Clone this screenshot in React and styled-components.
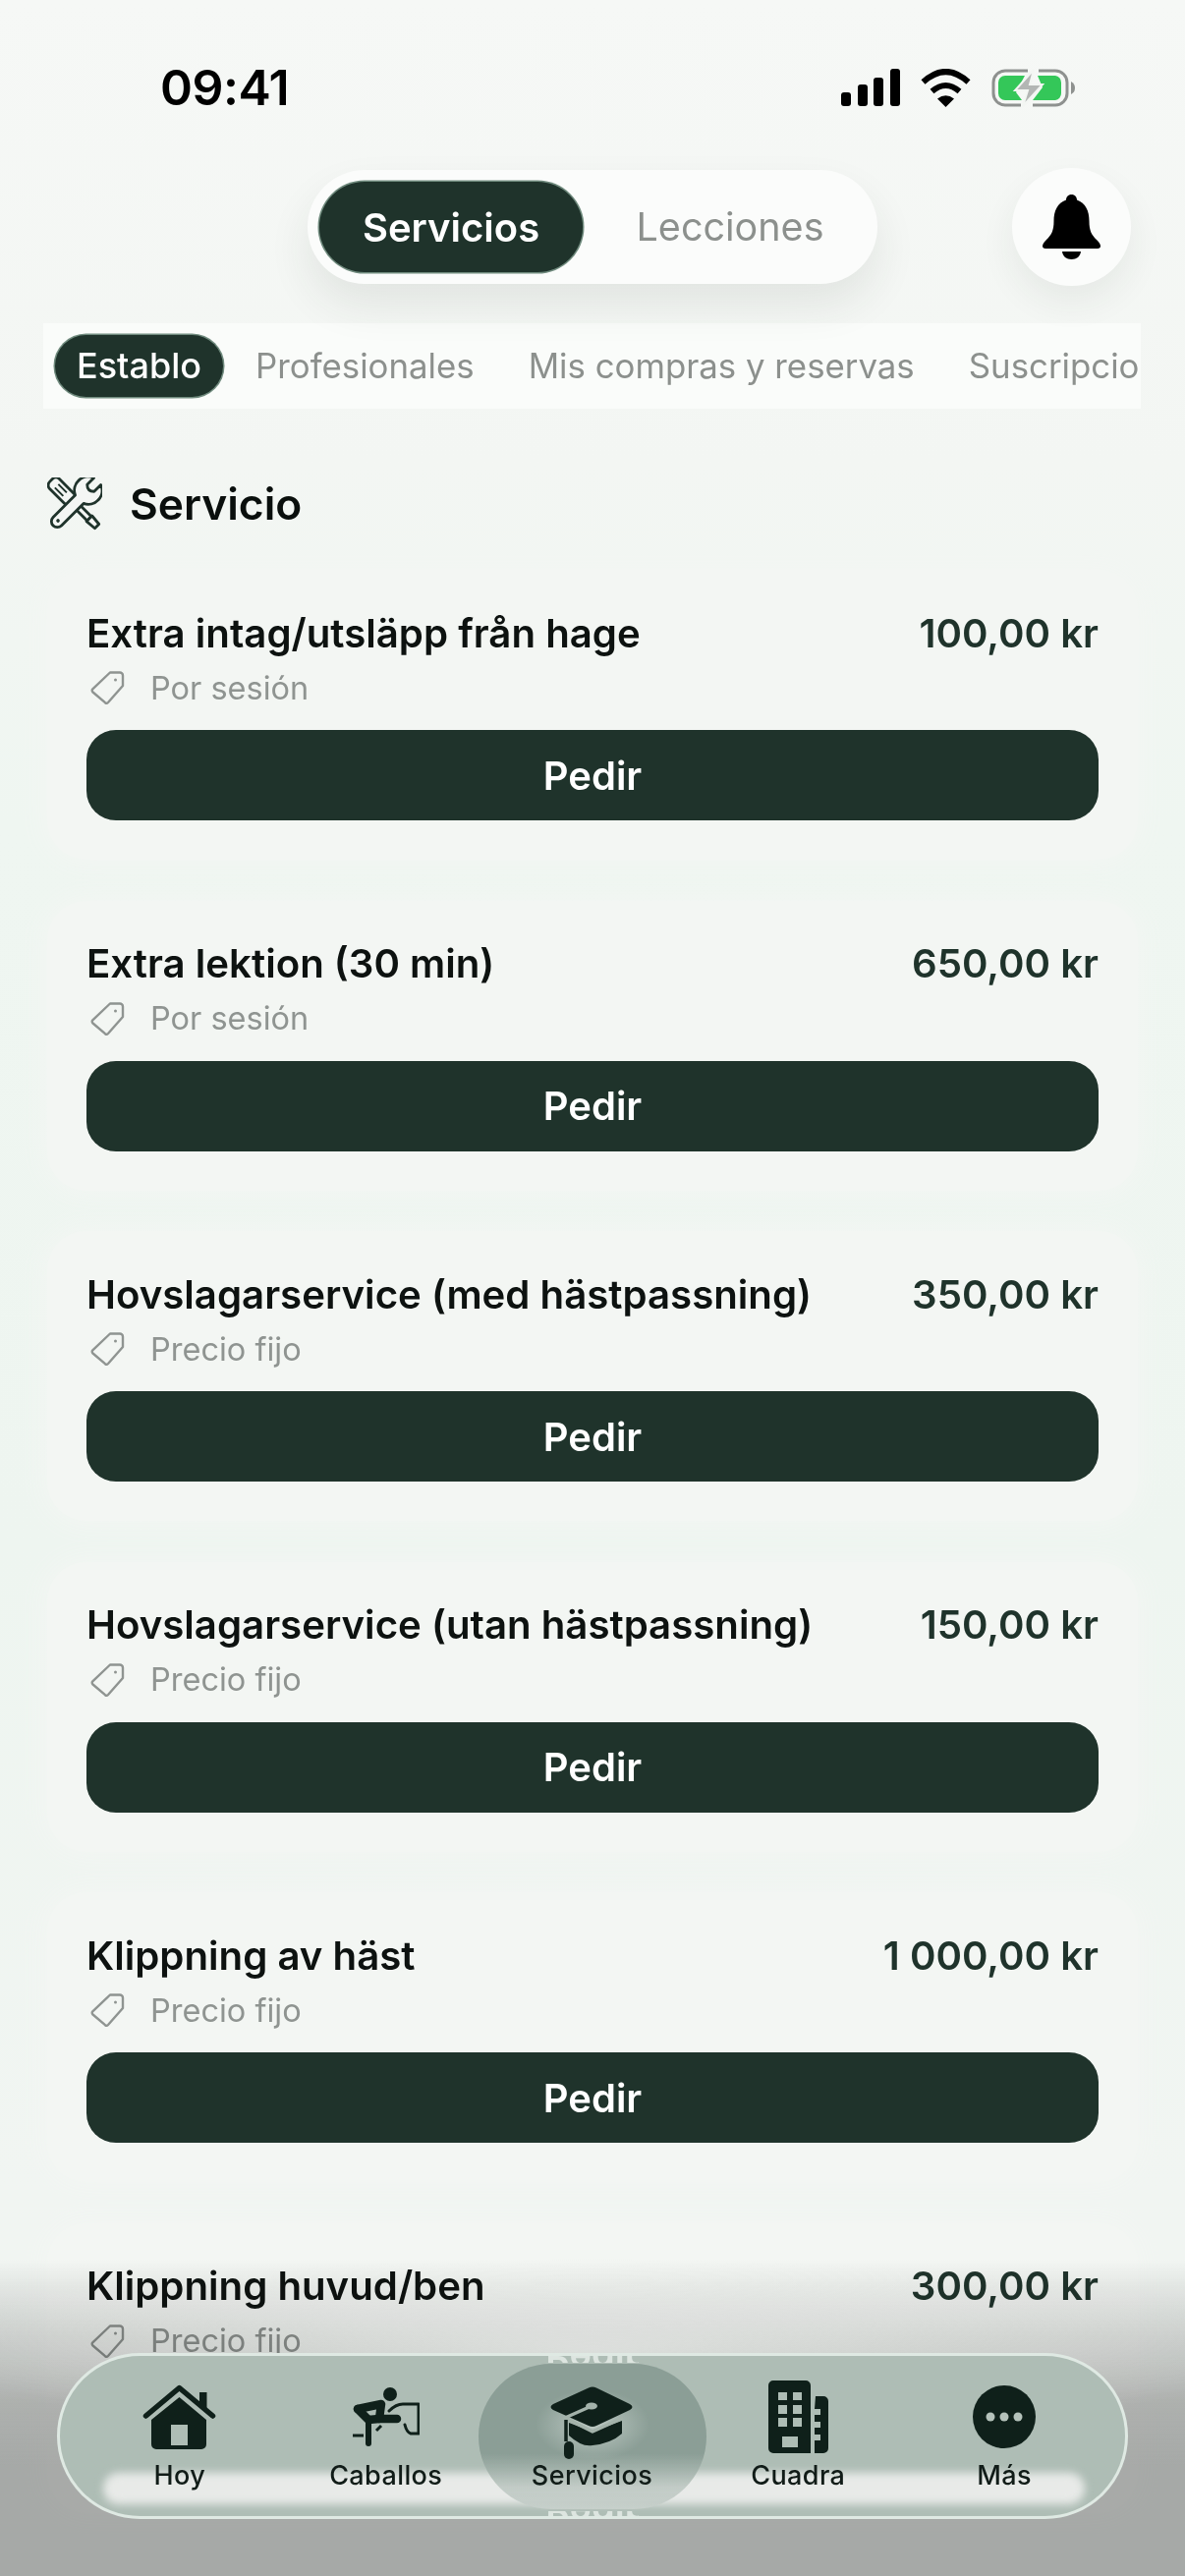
import React from 'react'
import styled, { createGlobalStyle } from 'styled-components'

const GlobalStyle = createGlobalStyle`
  html, body { margin: 0; padding: 0; background: #f3f6f3; }
  * { box-sizing: border-box; }
`

const Screen = styled.div`
  position: relative;
  width: 1206px;
  height: 2622px;
  overflow: hidden;
  font-family: Inter, 'Liberation Sans', sans-serif;
  background: linear-gradient(180deg, #f6f8f6 0%, #f3f6f3 18%, #eff6f1 32%, #eef5f0 60%, #f1f5f2 85%);
`
const StatusBar = styled.div`
  display: flex;
  align-items: center;
  justify-content: space-between;
  height: 58px;
  margin-top: 60px;
  padding: 0 112px 0 163px;
`
const Time = styled.div`
  font-size: 50px;
  font-weight: 600;
  letter-spacing: -0.5px;
  color: #000;
`
const StatusIcons = styled.div`
  display: flex;
  align-items: center;
  gap: 21px;
`
const HeaderRow = styled.div`
  display: flex;
  justify-content: flex-end;
  align-items: center;
  gap: 137px;
  height: 120px;
  margin-top: 53px;
  padding-right: 55px;
`
const Segment = styled.div`
  display: flex;
  align-items: center;
  width: 580px;
  height: 116px;
  padding-left: 12px;
  border-radius: 58px;
  background: #fbfcfb;
  box-shadow: 0 22px 44px rgba(40, 50, 45, 0.09);
`
const SegmentItem = styled.div`
  display: flex;
  align-items: center;
  justify-content: center;
  flex: 0 0 ${p => (p.$active ? '268px' : '300px')};
  height: 92px;
  border-radius: 46px;
  font-size: ${p => (p.$active ? '40px' : '39.5px')};
  font-weight: ${p => (p.$active ? 600 : 400)};
  color: ${p => (p.$active ? '#fff' : '#8c908d')};
  background: ${p => (p.$active ? '#1f332b' : 'transparent')};
  box-shadow: ${p => (p.$active ? '0 0 0 1.5px #6f8a7d' : 'none')};
`
const BellButton = styled.div`
  display: flex;
  align-items: center;
  justify-content: center;
  width: 121px;
  height: 120px;
  border-radius: 50%;
  background: #fbfcfb;
  box-shadow: 0 16px 36px rgba(40, 50, 45, 0.07);
`
const Tabs = styled.div`
  display: flex;
  align-items: center;
  gap: 11px;
  height: 87px;
  margin: 38px 45px 0 44px;
  padding-left: 12px;
  overflow: hidden;
  white-space: nowrap;
  background: #fafcfa;
`
const Tab = styled.div`
  flex: none;
  height: 63px;
  line-height: 63px;
  padding: 0 22px;
  border-radius: 32px;
  font-size: ${p => (p.$active ? '36px' : '34.8px')};
  font-weight: ${p => (p.$active ? 500 : 400)};
  color: ${p => (p.$active ? '#fff' : '#8c908d')};
  background: ${p => (p.$active ? '#1f332b' : 'transparent')};
  box-shadow: ${p => (p.$active ? '0 0 0 1.5px #6f8a7d' : 'none')};
`
const SectionTitle = styled.div`
  display: flex;
  align-items: center;
  gap: 28px;
  height: 60px;
  margin-top: 67px;
  padding-left: 48px;
  font-size: 44.3px;
  font-weight: 600;
  color: #0a0f0d;
`
const CardList = styled.div`
  display: flex;
  flex-direction: column;
  gap: 41.6px;
  margin-top: 37px;
  padding: 0 48px;
`
const Card = styled.div`
  flex: none;
  height: 295px;
  padding: 40px 40px 0;
  border-radius: 40px;
  background: #f3f6f3;
  box-shadow: 0 0 26px 4px #f3f6f3;
`
const TitleRow = styled.div`
  display: flex;
  align-items: center;
  justify-content: space-between;
  height: 48px;
  font-size: 40.2px;
  font-weight: 600;
  color: #0d1210;
`
const Price = styled.span`
  color: #1f332b;
`
const TagRow = styled.div`
  display: flex;
  align-items: center;
  gap: 26px;
  height: 48px;
  margin-top: 8px;
  padding-left: 4px;
  font-size: 32.5px;
  color: #8f9491;
`
const OrderButton = styled.div`
  display: flex;
  align-items: center;
  justify-content: center;
  height: 92px;
  margin-top: 19px;
  border-radius: 30px;
  background: #1f332b;
  color: #fff;
  font-size: 40px;
  font-weight: 600;
`
const BottomFade = styled.div`
  position: absolute;
  left: 0;
  right: 0;
  bottom: 0;
  height: 322px;
  mix-blend-mode: multiply;
  background:
    radial-gradient(ellipse 720px 90px at 50% 90px, rgba(255, 255, 255, 0.5), rgba(255, 255, 255, 0)),
    linear-gradient(180deg, rgba(176, 176, 176, 0) 0%, rgba(176, 176, 176, 0.55) 25%, rgba(176, 176, 176, 0.9) 45%, #b0b0b0 65%);
`
const NavBar = styled.nav`
  position: absolute;
  left: 58px;
  top: 2395px;
  display: flex;
  width: 1090px;
  height: 169px;
  padding: 0 0 0 17px;
  overflow: hidden;
  border-radius: 85px;
  border: 3px solid #dfe9e3;
  background: #aebdb5;
`
const NavGlow = styled.div`
  position: absolute;
  left: 44px;
  right: 41px;
  top: 119px;
  height: 32px;
  border-radius: 16px;
  background: #e8eae8;
  filter: blur(4px);
`
const MirrorText = styled.div`
  position: absolute;
  left: 0;
  right: 0;
  ${p => (p.$bottom ? 'bottom: 0;' : 'top: 0;')}
  height: ${p => (p.$bottom ? '5px' : '7px')};
  overflow: hidden;
  text-align: center;
  font-size: 38px;
  line-height: 7px;
  font-weight: 600;
  color: #dde5e0;
  transform: scaleY(-1);
`
const NavItem = styled.div`
  position: relative;
  flex: 0 0 209.8px;
  display: flex;
  flex-direction: column;
  align-items: center;
  height: 100%;
  font-size: 27px;
  font-weight: 500;
  letter-spacing: 0.4px;
  color: #111c18;

  ${p => p.$active && `
    &::before {
      content: '';
      position: absolute;
      left: -11px;
      top: 8px;
      width: 232px;
      height: 148px;
      border-radius: 74px;
      background:
        radial-gradient(ellipse 58px 36px at 50% 62px, rgba(205, 215, 210, 0.75), rgba(205, 215, 210, 0)),
        linear-gradient(180deg, #8b9e96 0%, #8b9e96 62%, rgba(190, 200, 195, 0.9) 85%, #c6cfca 100%);
    }
  `}
`
const NavIconSlot = styled.div`
  position: relative;
  display: flex;
  align-items: center;
  justify-content: center;
  height: 74px;
  margin-top: 25px;
`
const NavLabel = styled.span`
  position: relative;
  margin-top: 6px;
  line-height: 34px;
`
const CapSvg = styled.svg`
  margin-top: 12px;
`

const Signal = () => (
  <svg width="60" height="38" viewBox="0 0 60 38" fill="#000">
    <rect x="0" y="24" width="10" height="14" rx="3" />
    <rect x="17" y="16" width="10" height="22" rx="3" />
    <rect x="33" y="9" width="10" height="29" rx="3" />
    <rect x="50" y="0" width="10" height="38" rx="3" />
  </svg>
)

const Wifi = () => (
  <svg width="51" height="39" viewBox="0 0 51 39" fill="none" stroke="#000" strokeWidth="6">
    <path d="M2.500 13.500Q25.500 -7.500 48.500 13.500" />
    <path d="M11.500 23Q25.500 11 39.500 23" />
    <path d="M17 30.500Q25.500 24 34 30.500L25.500 39Z" fill="#000" stroke="none" />
  </svg>
)

const Battery = () => (
  <svg width="85" height="39" viewBox="0 0 85 39" fill="none">
    <path d="M37 2H14A12 12 0 0 0 2 14V25A12 12 0 0 0 14 37H30M48 2H65A12 12 0 0 1 77 14V25A12 12 0 0 1 65 37H42" stroke="#8e918f" strokeWidth="3" />
    <path d="M81 13Q85 15 85 19.500Q85 24 81 26Z" fill="#8e918f" />
    <path d="M34 7H14A7 7 0 0 0 7 14V25A7 7 0 0 0 14 32H31L25 24ZM47 7H65A7 7 0 0 1 71 14V25A7 7 0 0 1 65 32H42L52 19Z" fill="#34c759" />
    <path d="M43 1L24 22H37L32 38L52 16H39Z" fill="#b3b6b4" stroke="#f3f6f3" strokeWidth="2" />
  </svg>
)

const Bell = () => (
  <svg width="59" height="66" viewBox="0 0 59 66" fill="#000">
    <path d="M29.500 0C33 0 35 2.500 35 5.500C44 8.500 47.500 17 47.500 27C47.500 37 50 41 55 46C58 49 59 51 59 52.500C59 54 58 55 56 55H3C1 55 0 54 0 52.500C0 51 1 49 4 46C9 41 11.500 37 11.500 27C11.500 17 15 8.500 24 5.500C24 2.500 26 0 29.500 0Z" />
    <path d="M20 58H39C38.500 63 34.500 66 29.500 66C24.500 66 20.500 63 20 58Z" />
  </svg>
)

const Tools = () => (
  <svg width="56" height="54" viewBox="0 0 56 54" fill="#f4f6f4" stroke="#1f332b" strokeWidth="2.800" strokeLinejoin="round">
    <g transform="rotate(-45 28 27)">
      <rect x="21" y="-7" width="14" height="31" rx="5" />
      <path d="M25 24H31V48H25Z" />
      <path d="M24 48H32L31 59H25Z" />
      <path d="M25.500 1V13M30.500 1V13" fill="none" strokeWidth="2" />
    </g>
    <g transform="rotate(45 28 27)">
      <path d="M22 20.200A14 14 0 0 1 23 -5.600V4Q28 9 33 4V-5.600A14 14 0 0 1 34 20.200V52A6 6 0 0 1 22 52Z" />
      <circle cx="28" cy="51" r="1.800" fill="#1f332b" stroke="none" />
    </g>
  </svg>
)

const PriceTag = () => (
  <svg width="35" height="36" viewBox="0 0 35 36" fill="none" stroke="#8f9491" strokeWidth="2.400" strokeLinejoin="round">
    <path d="M20 2.500H30A3 3 0 0 1 33 5.500V16L18 33A2.200 2.200 0 0 1 15 33.200L2.500 22.500A2.200 2.200 0 0 1 2.300 19.300Z" />
    <circle cx="25.500" cy="10" r="1.500" fill="#8f9491" stroke="none" />
  </svg>
)

const HomeIcon = () => (
  <svg width="75" height="66" viewBox="0 0 75 66" fill="#0f201a">
    <path d="M3.500 32L37.500 3.500L71.500 32" fill="none" stroke="#0f201a" strokeWidth="5.500" strokeLinecap="round" strokeLinejoin="round" />
    <rect x="58" y="8" width="7.500" height="16" />
    <path fillRule="evenodd" d="M37.500 13L65 36V61A5 5 0 0 1 60 66H14A5 5 0 0 1 9 61V36ZM29 41V62H46V41Z" />
  </svg>
)

const RiderIcon = () => (
  <svg width="69" height="60" viewBox="0 0 69 60" fill="none" stroke="#0f201a" strokeLinecap="round" strokeLinejoin="round">
    <circle cx="39" cy="7" r="7" fill="#0f201a" stroke="none" />
    <path d="M6 22L30 17L28 32H46" strokeWidth="8.500" />
    <path d="M6 22L17 33L28 32" strokeWidth="8.500" />
    <path d="M17 34V57" strokeWidth="6" />
    <path d="M1 49H12" strokeWidth="3" strokeLinecap="butt" />
    <path d="M25 44L30 39" strokeWidth="3" strokeLinecap="butt" />
    <path d="M38 24Q45 17 52 17H68V47H60Q56 46 54 38" strokeWidth="3" />
  </svg>
)

const CapIcon = () => (
  <CapSvg width="84" height="74" viewBox="0 0 84 74">
    <path d="M19 37V50Q32 62 43 60Q62 58 73 48V35L43 46Z" fill="#0f201a" />
    <path d="M39 1.500Q43 -0.500 47 1.500L81 18Q86 21 81 24L47 40Q43 42 39 40L3 24Q-2 21 3 18Z" fill="#0f201a" />
    <path d="M42 20L15 32L43 46L74 32" fill="none" stroke="#a3b2aa" strokeWidth="3.500" strokeLinejoin="round" />
    <ellipse cx="42" cy="20" rx="6" ry="3.500" fill="#a3b2aa" />
    <path d="M16 34V56" stroke="#0f201a" strokeWidth="3.500" />
    <rect x="14" y="56" width="10" height="18" rx="5" fill="#0f201a" />
  </CapSvg>
)

const BuildingIcon = () => (
  <svg width="61" height="74" viewBox="0 0 61 74">
    <path fillRule="evenodd" fill="#0f201a" d="M5 0H38A5 5 0 0 1 43 5V74H5A5 5 0 0 1 0 69V5A5 5 0 0 1 5 0ZM10 12V20H19V12ZM25 12V20H34V12ZM10 25V34H19V25ZM25 25V34H34V25ZM10 38V47H19V38ZM25 38V47H34V38ZM14 57V68H30V57Z" />
    <path fillRule="evenodd" fill="#0f201a" d="M48 16H56A5 5 0 0 1 61 21V69A5 5 0 0 1 56 74H47V61H53V55H47V48H53V42H47V35H53V29H47Z" />
  </svg>
)

const MoreIcon = () => (
  <svg width="64" height="64" viewBox="0 0 64 64">
    <circle cx="32" cy="32" r="32" fill="#0f201a" />
    <circle cx="18" cy="32" r="4.500" fill="#b5c2bb" />
    <circle cx="32" cy="32" r="4.500" fill="#b5c2bb" />
    <circle cx="46" cy="32" r="4.500" fill="#b5c2bb" />
  </svg>
)

const services = [
  { name: 'Extra intag/utsläpp från hage', price: '100,00 kr', rate: 'Por sesión' },
  { name: 'Extra lektion (30 min)', price: '650,00 kr', rate: 'Por sesión' },
  { name: 'Hovslagarservice (med hästpassning)', price: '350,00 kr', rate: 'Precio fijo' },
  { name: 'Hovslagarservice (utan hästpassning)', price: '150,00 kr', rate: 'Precio fijo' },
  { name: 'Klippning av häst', price: '1 000,00 kr', rate: 'Precio fijo' },
  { name: 'Klippning huvud/ben', price: '300,00 kr', rate: 'Precio fijo' },
]

const navItems = [
  { label: 'Hoy', Icon: HomeIcon },
  { label: 'Caballos', Icon: RiderIcon },
  { label: 'Servicios', Icon: CapIcon, active: true },
  { label: 'Cuadra', Icon: BuildingIcon },
  { label: 'Más', Icon: MoreIcon },
]

export default function App() {
  return (
    <Screen>
      <GlobalStyle />
      <StatusBar>
        <Time>09:41</Time>
        <StatusIcons>
          <Signal />
          <Wifi />
          <Battery />
        </StatusIcons>
      </StatusBar>
      <HeaderRow>
        <Segment>
          <SegmentItem $active>Servicios</SegmentItem>
          <SegmentItem>Lecciones</SegmentItem>
        </Segment>
        <BellButton><Bell /></BellButton>
      </HeaderRow>
      <Tabs>
        <Tab $active>Establo</Tab>
        <Tab>Profesionales</Tab>
        <Tab>Mis compras y reservas</Tab>
        <Tab>Suscripciones</Tab>
      </Tabs>
      <SectionTitle><Tools />Servicio</SectionTitle>
      <CardList>
        {services.map(s => (
          <Card key={s.name}>
            <TitleRow>
              <span>{s.name}</span>
              <Price>{s.price}</Price>
            </TitleRow>
            <TagRow><PriceTag />{s.rate}</TagRow>
            <OrderButton>Pedir</OrderButton>
          </Card>
        ))}
      </CardList>
      <BottomFade />
      <NavBar>
        <NavGlow />
        <MirrorText>Pedir</MirrorText>
        <MirrorText $bottom>Pedir</MirrorText>
        {navItems.map(({ label, Icon, active }) => (
          <NavItem key={label} $active={active}>
            <NavIconSlot><Icon /></NavIconSlot>
            <NavLabel>{label}</NavLabel>
          </NavItem>
        ))}
      </NavBar>
    </Screen>
  )
}
